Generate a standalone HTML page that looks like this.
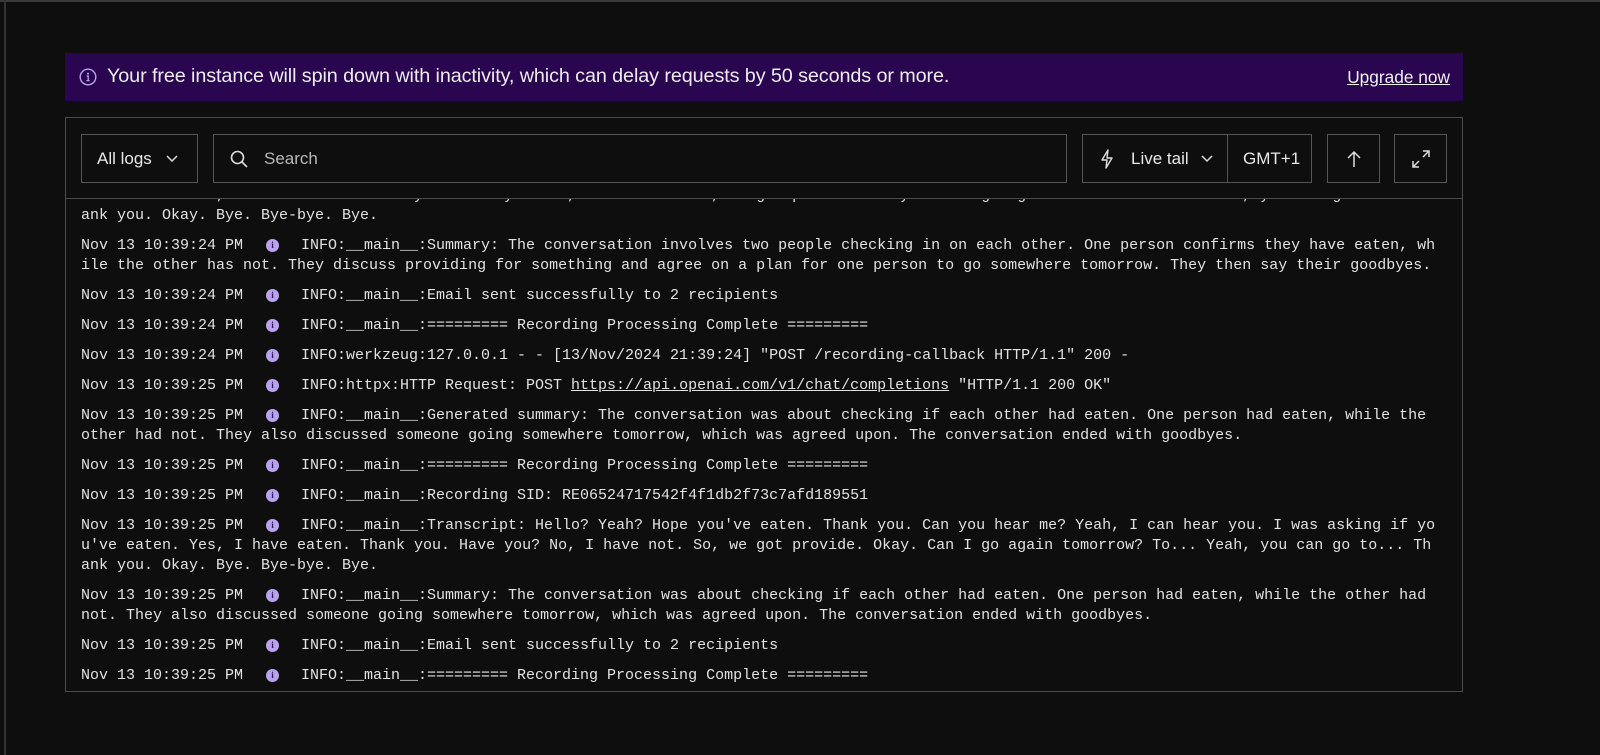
<!DOCTYPE html>
<html><head><meta charset="utf-8"><style>
*{margin:0;padding:0;box-sizing:border-box}
body{width:1600px;height:755px;background:#0e0e0e;position:relative;overflow:hidden;font-family:"Liberation Sans",sans-serif;color:#e8e8e8}
.frameT{position:absolute;left:0;top:0;width:1600px;height:2px;background:#3a3a3a}
.frameL{position:absolute;left:4px;top:0;width:2px;height:755px;background:#333}
.banner{position:absolute;left:65px;top:53px;width:1398px;height:48px;background:#2a0550}
.banner .t{position:absolute;left:42px;top:12px;font-size:19.8px;color:#ececec;letter-spacing:-0.1px}
.banner .u{position:absolute;right:13px;top:14px;font-size:17.3px;text-decoration:underline;color:#f0f0f0}
.panel{position:absolute;left:65px;top:117px;width:1398px;height:575px;border:1px solid #4a4a4a;background:#0e0e0e;overflow:hidden}
.tb{position:absolute;left:0;top:0;width:1396px;height:81px;border-bottom:1px solid #4a4a4a;background:#0e0e0e;z-index:2}
.btn{position:absolute;top:16px;height:49px;border:1px solid #555;font-size:17px;color:#e8e8e8}
.logs{position:absolute;left:0;top:0;width:1396px;height:573px;font-family:"Liberation Mono",monospace;font-size:15px;color:#e2e2e2;white-space:pre}
.l{position:absolute;left:15px;height:20px;line-height:20px}
.ic{position:absolute;left:185px;width:13px;height:13px;border-radius:50%;background:#b9a3f0;color:#2a1a4a;font:bold 9px/13px "Liberation Serif",serif;text-align:center}
.m{position:absolute;left:220px}
</style></head><body>
<div class="frameT"></div><div class="frameL"></div>
<div class="banner">
<svg style="position:absolute;left:14px;top:15px" width="18" height="18" viewBox="0 0 18 18"><circle cx="9" cy="9" r="7.8" fill="none" stroke="#b9a3f0" stroke-width="1.4"/><circle cx="9" cy="5.6" r="1" fill="#b9a3f0"/><path d="M7.6 8h1.6v4.6M7.4 12.6h3.2" stroke="#b9a3f0" stroke-width="1.3" fill="none"/></svg>
<div class="t">Your free instance will spin down with inactivity, which can delay requests by 50 seconds or more.</div>
<div class="u">Upgrade now</div>
</div>
<div class="panel">
<div class="tb">
<div class="btn" style="left:15px;width:117px"><span style="position:absolute;left:15px;top:14px">All logs</span>
<svg style="position:absolute;left:83px;top:19px" width="14" height="10" viewBox="0 0 14 10"><path d="M2 2l5 5 5-5" stroke="#ddd" stroke-width="1.5" fill="none"/></svg></div>
<div class="btn" style="left:147px;width:854px">
<svg style="position:absolute;left:15px;top:14px" width="20" height="20" viewBox="0 0 20 20"><circle cx="8.5" cy="8.5" r="6" fill="none" stroke="#ddd" stroke-width="1.6"/><path d="M13 13l5 5" stroke="#ddd" stroke-width="1.6"/></svg>
<span style="position:absolute;left:50px;top:14px;color:#b8b8b8">Search</span></div>
<div class="btn" style="left:1016px;width:230px">
<svg style="position:absolute;left:17px;top:14px" width="14" height="20" viewBox="0 0 14 20"><path d="M8 1L2 11h5l-1 8 6-10H7z" stroke="#ddd" stroke-width="1.4" fill="none" stroke-linejoin="round"/></svg>
<span style="position:absolute;left:48px;top:14px">Live tail</span>
<svg style="position:absolute;left:117px;top:19px" width="14" height="10" viewBox="0 0 14 10"><path d="M2 2l5 5 5-5" stroke="#ddd" stroke-width="1.5" fill="none"/></svg>
<div style="position:absolute;left:144px;top:0;width:1px;height:47px;background:#555"></div>
<span style="position:absolute;left:160px;top:14px">GMT+1</span></div>
<div class="btn" style="left:1261px;width:53px">
<svg style="position:absolute;left:16px;top:14px" width="20" height="20" viewBox="0 0 20 20"><path d="M10 18V3M4 9l6-6 6 6" stroke="#ddd" stroke-width="1.5" fill="none"/></svg></div>
<div class="btn" style="left:1328px;width:53px">
<svg style="position:absolute;left:16px;top:14px" width="20" height="20" viewBox="0 0 20 20"><path d="M12 2h6v6M18 2l-6 6M8 18H2v-6M2 18l6-6" stroke="#ddd" stroke-width="1.5" fill="none"/></svg></div>
</div>
<div class="logs">
<div class="l" style="top:68px">u've eaten. Yes, I have eaten. Thank you. Have you? No, I have not. So, we got provide. Okay. Can I go again tomorrow? To... Yeah, you can go to... Th</div>
<div class="l" style="top:88px">ank you. Okay. Bye. Bye-bye. Bye.</div>

<div class="l" style="top:118px">Nov 13 10:39:24 PM<span class="ic" style="top:3px">i</span><span class="m">INFO:__main__:Summary: The conversation involves two people checking in on each other. One person confirms they have eaten, wh</span></div>
<div class="l" style="top:138px">ile the other has not. They discuss providing for something and agree on a plan for one person to go somewhere tomorrow. They then say their goodbyes.</div>
<div class="l" style="top:168px">Nov 13 10:39:24 PM<span class="ic" style="top:3px">i</span><span class="m">INFO:__main__:Email sent successfully to 2 recipients</span></div>
<div class="l" style="top:198px">Nov 13 10:39:24 PM<span class="ic" style="top:3px">i</span><span class="m">INFO:__main__:========= Recording Processing Complete =========</span></div>
<div class="l" style="top:228px">Nov 13 10:39:24 PM<span class="ic" style="top:3px">i</span><span class="m">INFO:werkzeug:127.0.0.1 - - [13/Nov/2024 21:39:24] "POST /recording-callback HTTP/1.1" 200 -</span></div>
<div class="l" style="top:258px">Nov 13 10:39:25 PM<span class="ic" style="top:3px">i</span><span class="m">INFO:httpx:HTTP Request: POST <u>https://api.openai.com/v1/chat/completions</u> "HTTP/1.1 200 OK"</span></div>
<div class="l" style="top:288px">Nov 13 10:39:25 PM<span class="ic" style="top:3px">i</span><span class="m">INFO:__main__:Generated summary: The conversation was about checking if each other had eaten. One person had eaten, while the</span></div>
<div class="l" style="top:308px">other had not. They also discussed someone going somewhere tomorrow, which was agreed upon. The conversation ended with goodbyes.</div>
<div class="l" style="top:338px">Nov 13 10:39:25 PM<span class="ic" style="top:3px">i</span><span class="m">INFO:__main__:========= Recording Processing Complete =========</span></div>
<div class="l" style="top:368px">Nov 13 10:39:25 PM<span class="ic" style="top:3px">i</span><span class="m">INFO:__main__:Recording SID: RE06524717542f4f1db2f73c7afd189551</span></div>
<div class="l" style="top:398px">Nov 13 10:39:25 PM<span class="ic" style="top:3px">i</span><span class="m">INFO:__main__:Transcript: Hello? Yeah? Hope you've eaten. Thank you. Can you hear me? Yeah, I can hear you. I was asking if yo</span></div>
<div class="l" style="top:418px">u've eaten. Yes, I have eaten. Thank you. Have you? No, I have not. So, we got provide. Okay. Can I go again tomorrow? To... Yeah, you can go to... Th</div>
<div class="l" style="top:438px">ank you. Okay. Bye. Bye-bye. Bye.</div>
<div class="l" style="top:468px">Nov 13 10:39:25 PM<span class="ic" style="top:3px">i</span><span class="m">INFO:__main__:Summary: The conversation was about checking if each other had eaten. One person had eaten, while the other had</span></div>
<div class="l" style="top:488px">not. They also discussed someone going somewhere tomorrow, which was agreed upon. The conversation ended with goodbyes.</div>
<div class="l" style="top:518px">Nov 13 10:39:25 PM<span class="ic" style="top:3px">i</span><span class="m">INFO:__main__:Email sent successfully to 2 recipients</span></div>
<div class="l" style="top:548px">Nov 13 10:39:25 PM<span class="ic" style="top:3px">i</span><span class="m">INFO:__main__:========= Recording Processing Complete =========</span></div>
</div>
</div>
</body></html>
